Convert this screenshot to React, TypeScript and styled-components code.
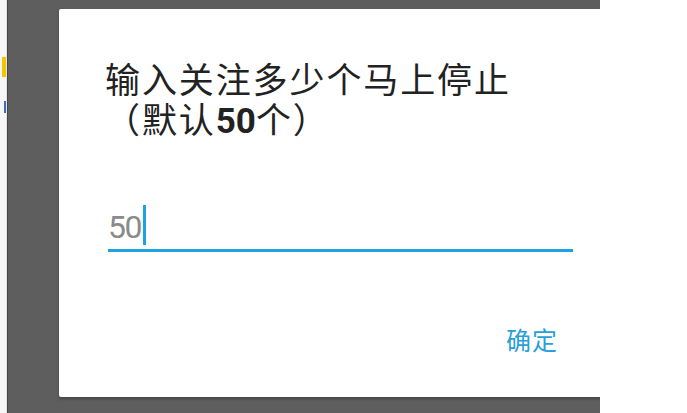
import React from "react";
import styled, { createGlobalStyle } from "styled-components";

const GlobalStyle = createGlobalStyle`
  html, body {
    margin: 0;
    padding: 0;
    background: #ffffff;
    overflow: hidden;
  }
  body {
    font-family: "Noto Sans CJK SC", "Noto Sans", sans-serif;
  }
`;

const Page = styled.div`
  display: flex;
  width: 687px;
  height: 413px;
  background: #ffffff;
`;

const SideStrip = styled.div`
  width: 7px;
  display: flex;
  flex-direction: column;
  align-items: flex-end;
  background: #f7f7f7;
  border-right: 1px solid #e2e2e2;
  box-sizing: border-box;
  padding-top: 57px;
`;

const Marker = styled.div<{ $color: string; $h: number; $gap: number; $w?: number }>`
  width: ${(p) => p.$w ?? 4}px;
  height: ${(p) => p.$h}px;
  margin-top: ${(p) => p.$gap}px;
  background: ${(p) => p.$color};
`;

const Overlay = styled.div`
  width: 593px;
  height: 413px;
  background: #5e5e5e;
  border-left: 1px solid #474747;
  box-sizing: border-box;
  padding: 9px 0 0 51px;
  overflow: hidden;
`;

const Dialog = styled.div`
  width: 560px;
  height: 388px;
  background: #ffffff;
  border-radius: 2px 0 0 2px;
  box-shadow: 0 2px 3px rgba(0, 0, 0, 0.25);
  box-sizing: border-box;
  padding: 49px 0 0 46px;
  display: flex;
  flex-direction: column;
`;

const Title = styled.div`
  display: flex;
  flex-direction: column;
  color: #222222;
`;

const TitleLine = styled.div`
  font-size: 35px;
  line-height: 40px;
  letter-spacing: 1.9px;
  white-space: nowrap;
`;

const Strong = styled.b`
  font-family: Roboto, "Noto Sans CJK SC", sans-serif;
  font-weight: 700;
  letter-spacing: 0;
`;

const Field = styled.div`
  display: flex;
  align-items: flex-end;
  width: 465px;
  height: 48px;
  margin-top: 62px;
  margin-left: 3px;
  padding-bottom: 2px;
  box-sizing: border-box;
  border-bottom: 3px solid #1ba3e2;
`;

const Value = styled.span`
  font-family: Roboto, sans-serif;
  font-size: 32px;
  line-height: 40px;
  letter-spacing: -1.5px;
  color: #8a8a8a;
`;

const Caret = styled.span`
  width: 3px;
  height: 40px;
  margin-left: 2px;
  margin-bottom: 2px;
  background: #1ba3e2;
`;

const Actions = styled.div`
  display: flex;
  justify-content: flex-end;
  width: 468px;
  margin-top: 69px;
`;

const TextButton = styled.button`
  border: none;
  background: transparent;
  padding: 0;
  margin-right: 15px;
  font-family: "Noto Sans CJK SC", sans-serif;
  font-size: 25px;
  letter-spacing: 1px;
  color: #2a9fda;
  cursor: pointer;
`;

const App = () => {
  const value = "50";

  return (
    <>
      <GlobalStyle />
      <Page>
        <SideStrip>
          <Marker $color="#f2c500" $h={20} $gap={0} />
          <Marker $color="#3b6fb8" $h={12} $gap={24} $w={2} />
        </SideStrip>
        <Overlay>
          <Dialog>
            <Title>
              <TitleLine>输入关注多少个马上停止</TitleLine>
              <TitleLine>
                （默认<Strong>50</Strong>个）
              </TitleLine>
            </Title>
            <Field>
              <Value>{value}</Value>
              <Caret />
            </Field>
            <Actions>
              <TextButton>确定</TextButton>
            </Actions>
          </Dialog>
        </Overlay>
      </Page>
    </>
  );
};

export default App;
